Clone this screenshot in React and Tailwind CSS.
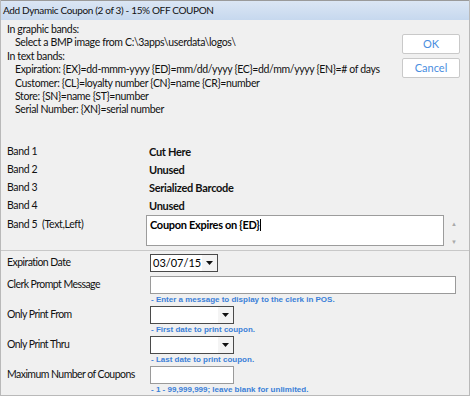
import { useState } from "react";

// Dòng hướng dẫn phía trên
const HELP_LINES = [
  { text: "In graphic bands:", indent: false },
  { text: "Select a BMP image from C:\\3apps\\userdata\\logos\\", indent: true },
  { text: "In text bands:", indent: false },
  {
    text: "Expiration: {EX}=dd-mmm-yyyy {ED}=mm/dd/yyyy {EC}=dd/mm/yyyy {EN}=# of days",
    indent: true,
  },
  { text: "Customer: {CL}=loyalty number {CN}=name {CR}=number", indent: true },
  { text: "Store: {SN}=name {ST}=number", indent: true },
  { text: "Serial Number: {XN}=serial number", indent: true },
];

const BANDS = [
  { label: "Band 1", value: "Cut Here" },
  { label: "Band 2", value: "Unused" },
  { label: "Band 3", value: "Serialized Barcode" },
  { label: "Band 4", value: "Unused" },
];

const FONT = "font-['Lato','Open_Sans',sans-serif]";
const TXT = "text-[10.5px] tracking-[-0.35px] whitespace-nowrap";

const Arrow = () => (
  <svg width="7" height="4" viewBox="0 0 7 4">
    <path d="M0 0h7L3.5 4z" fill="#111" />
  </svg>
);

const Combo = ({ value, width }) => (
  <div
    className={`flex h-[18px] items-stretch border border-[#4a4a4a] bg-white ${width}`}
  >
    <div className="flex flex-1 items-center pl-[2px] text-[11px] text-black">{value}</div>
    <div className="flex w-[15px] items-center justify-center bg-[#f4f4f4]">
      <Arrow />
    </div>
  </div>
);

const Hint = ({ children }) => (
  <div className="whitespace-nowrap pl-[1px] font-['Liberation_Sans',sans-serif] text-[8px] font-bold leading-[11px] text-[#3a7fd8]">
    {children}
  </div>
);

const FieldRow = ({ label, children, hint }) => (
  <div className="flex">
    <div className="flex h-[18px] w-[149px] shrink-0 items-center whitespace-nowrap pl-[6px] text-[10.5px] tracking-[-0.55px]">
      {label}
    </div>
    <div className="flex-1">
      {children}
      {hint && <Hint>{hint}</Hint>}
    </div>
  </div>
);

export default function App() {
  const [band5] = useState("Coupon Expires on {ED}");

  return (
    <div
      className={`${FONT} flex h-[396px] w-[470px] flex-col overflow-hidden border-x border-b border-[#b9b9b9] bg-[#f0f0f0] text-[#111]`}
    >
      {/* Thanh tiêu đề */}
      <div className="flex h-[20px] shrink-0 items-center border-t border-[#9a9a9a] bg-gradient-to-b from-[#dbe6f4] to-[#c6d8ee] pl-[2px] text-[10px] tracking-[-0.35px] text-[#111]">
        Add Dynamic Coupon (2 of 3) - 15% OFF COUPON
      </div>

      {/* Hướng dẫn + nút */}
      <div className="flex h-[123px] shrink-0">
        <div className={`flex-1 pl-[6px] pt-[3px] leading-[13.4px] ${TXT}`}>
          {HELP_LINES.map((l, i) => (
            <div key={i} className={l.indent ? "pl-[8px]" : ""}>
              {l.text}
            </div>
          ))}
        </div>
        <div className="flex w-[67px] shrink-0 flex-col gap-[4px] pt-[14px]">
          <button className="h-[20px] w-[58px] rounded-[2px] border border-[#c9c9c9] bg-white text-[11px] text-[#4a8ee0]">
            OK
          </button>
          <button className="h-[20px] w-[58px] rounded-[2px] border border-[#c9c9c9] bg-white text-[11px] text-[#4a8ee0]">
            Cancel
          </button>
        </div>
      </div>

      {/* Các band */}
      <div className="flex flex-col">
        {BANDS.map((b) => (
          <div key={b.label} className={`flex h-[18px] items-center ${TXT}`}>
            <div className="w-[148px] shrink-0 pl-[6px]">{b.label}</div>
            <div className="text-[11px] font-bold tracking-[-0.3px] text-[#111]">{b.value}</div>
          </div>
        ))}
        <div className="flex h-[35px]">
          <div className={`w-[145px] shrink-0 pl-[6px] pt-[2px] ${TXT}`}>Band 5&nbsp; (Text,Left)</div>
          <div className="h-[31px] w-[298px] border border-[#9c9c9c] bg-white px-[3px] pt-[1px] text-[11px] font-bold tracking-[-0.3px] text-black">
            {band5}
            <span className="ml-[1px] inline-block h-[12px] w-[1px] translate-y-[2px] bg-black" />
          </div>
          <div className="flex w-[20px] flex-col items-center justify-between py-[4px] text-[6px] text-[#aaa]">
            <span>▲</span>
            <span>▼</span>
          </div>
        </div>
      </div>

      <div className="h-[1px] shrink-0 bg-[#c8c8c8]" />

      {/* Các trường nhập */}
      <div className="flex flex-col gap-[1px] pt-[3px]">
        <FieldRow label="Expiration Date">
          <Combo value="03/07/15" width="w-[68px]" />
        </FieldRow>
        <div className="h-[2px]" />
        <FieldRow
          label="Clerk Prompt Message"
          hint="- Enter a message to display to the clerk in POS."
        >
          <div className="h-[18px] w-[306px] border border-[#9a9a9a] bg-white" />
        </FieldRow>
        <FieldRow label="Only Print From" hint="- First date to print coupon.">
          <Combo value="" width="w-[84px]" />
        </FieldRow>
        <FieldRow label="Only Print Thru" hint="- Last date to print coupon.">
          <Combo value="" width="w-[84px]" />
        </FieldRow>
        <FieldRow
          label="Maximum Number of Coupons"
          hint="- 1 - 99,999,999; leave blank for unlimited."
        >
          <div className="h-[18px] w-[84px] border border-[#9a9a9a] bg-white" />
        </FieldRow>
      </div>
    </div>
  );
}
